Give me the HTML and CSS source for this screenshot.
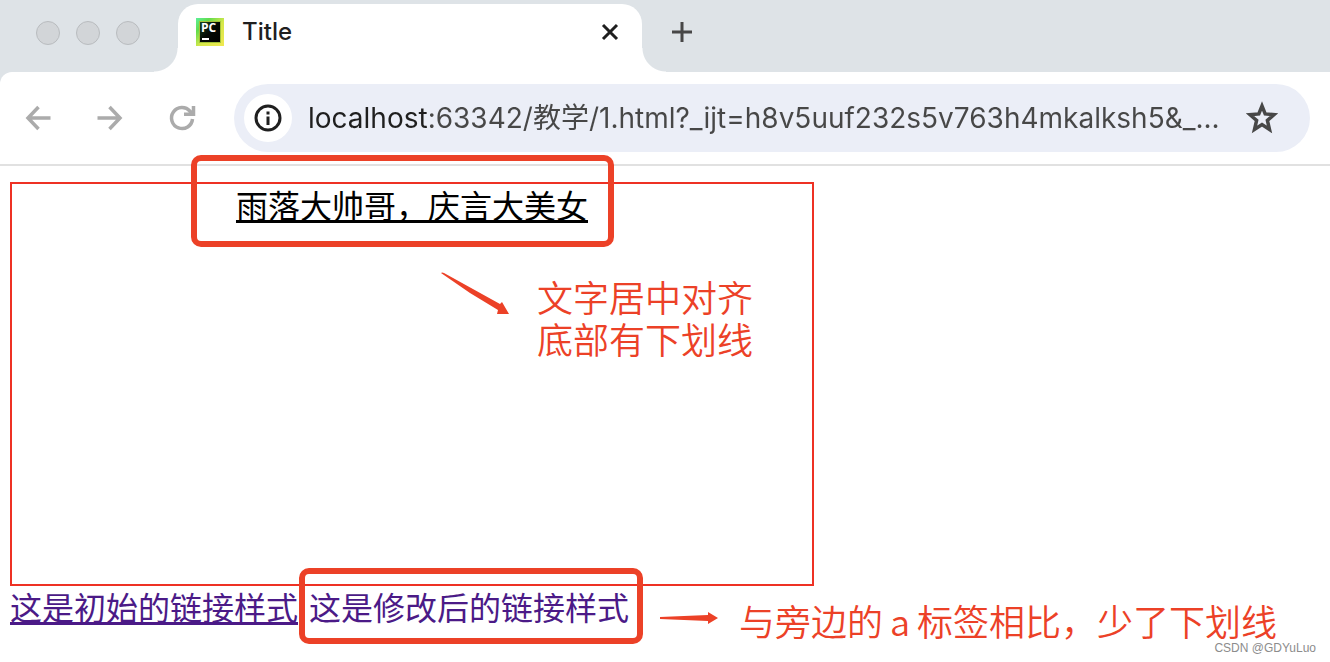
FILE: index.html
```html
<!DOCTYPE html>
<html lang="zh-CN">
<head>
    <meta charset="UTF-8">
    <title>Title</title>
    <link rel="stylesheet" href="styles.css">
</head>
<body>
    <!-- Tab strip -->
    <header class="tab-strip">
        <div class="window-buttons">
            <button type="button" class="dot" aria-label="Close window"></button>
            <button type="button" class="dot" aria-label="Minimize window"></button>
            <button type="button" class="dot" aria-label="Zoom window"></button>
        </div>
        <div class="tab">
            <svg class="favicon" viewBox="0 0 28 28">
                <defs>
                    <linearGradient id="frame" x1="0" y1="0" x2="1" y2="1">
                        <stop offset="0" stop-color="#5cf09a"></stop>
                        <stop offset="0.25" stop-color="#62dc4c"></stop>
                        <stop offset="0.55" stop-color="#d5e84a"></stop>
                        <stop offset="1" stop-color="#f0e850"></stop>
                    </linearGradient>
                    <linearGradient id="inner" x1="0" y1="0" x2="1" y2="1">
                        <stop offset="0" stop-color="#16451c"></stop>
                        <stop offset="0.5" stop-color="#040a04"></stop>
                        <stop offset="1" stop-color="#000"></stop>
                    </linearGradient>
                </defs>
                <rect width="28" height="28" fill="url(#frame)"></rect>
                <rect x="3" y="3" width="22" height="22" fill="#a3c238"></rect>
                <rect x="4" y="4" width="20" height="20" fill="url(#inner)"></rect>
                <rect x="6" y="20" width="7" height="2" fill="#fff"></rect>
                <text class="favicon-text" x="5" y="14">PC</text>
            </svg>
            <span class="tab-title">Title</span>
            <button type="button" class="icon-button" aria-label="Close tab">
                <svg width="24" height="24" viewBox="0 0 24 24" fill="none" stroke="#1f1f1f" stroke-width="3">
                    <path d="M5 5L19 19M19 5L5 19"></path>
                </svg>
            </button>
        </div>
        <button type="button" class="icon-button new-tab" aria-label="New tab">
            <svg width="24" height="24" viewBox="0 0 24 24" fill="none" stroke="#474747" stroke-width="3">
                <path d="M12 2V22M2 12H22"></path>
            </svg>
        </button>
    </header>

    <!-- Toolbar -->
    <nav class="toolbar">
        <div class="nav-buttons">
            <button type="button" class="icon-button" aria-label="Back">
                <svg width="28" height="28" viewBox="0 0 28 28" fill="none" stroke="#ababab" stroke-width="3.5">
                    <path d="M26.500 14H5M14.500 3L4 14L14.500 25"></path>
                </svg>
            </button>
            <button type="button" class="icon-button" aria-label="Forward">
                <svg width="28" height="28" viewBox="0 0 28 28" fill="none" stroke="#ababab" stroke-width="3.5">
                    <path d="M1.500 14H23M13.500 3L24 14L13.500 25"></path>
                </svg>
            </button>
            <button type="button" class="icon-button" aria-label="Reload">
                <svg width="28" height="28" viewBox="0 0 28 28" fill="none" stroke="#ababab" stroke-width="3.5">
                    <path d="M24.500 15A10.500 10.500 0 1 1 22 7.200L25 10.200M25.500 2V10.200H16"></path>
                </svg>
            </button>
        </div>
        <div class="address-bar">
            <button type="button" class="icon-button site-info" aria-label="Site information">
                <svg width="28" height="28" viewBox="0 0 28 28" fill="none" stroke="#1f1f1f" stroke-width="3">
                    <circle cx="14" cy="14" r="12"></circle>
                    <path d="M14 12.500V21M14 7.500V10.500"></path>
                </svg>
            </button>
            <input type="text" class="url" aria-label="Address" value="localhost:63342/教学/1.html?_ijt=h8v5uuf232s5v763h4mkalksh5&amp;_...">
            <button type="button" class="icon-button" aria-label="Bookmark this page">
                <svg width="36" height="36" viewBox="0 0 36 36" fill="none" stroke="#474747" stroke-width="3.5">
                    <path d="M18 6L21.200 13.900L30 14.700L23.400 20.400L25.500 29.500L18 24.600L10.500 29.500L12.600 20.400L6 14.700L14.800 13.900Z"></path>
                </svg>
            </button>
        </div>
    </nav>

    <!-- Page content -->
    <main class="page">
        <div class="box">雨落大帅哥，庆言大美女</div>
        <div class="links">
            <a class="link" href="#">这是初始的链接样式</a>
            <a class="link plain" href="#">这是修改后的链接样式</a>
        </div>

        <!-- Notes drawn over the page -->
        <div class="mark mark-text"></div>
        <svg class="arrow arrow-text" width="70" height="44" viewBox="0 0 70 44">
            <path d="M1 1Q2 0 4 1L60 32L62 30L69 42L57 42L58 38L30 21Z"></path>
        </svg>
        <p class="note note-text">文字居中对齐<br>底部有下划线</p>

        <div class="mark mark-link"></div>
        <svg class="arrow arrow-link" width="60" height="14" viewBox="0 0 60 14">
            <path d="M1 6L49 4L49 1L59 7L49 13L49 10L1 8Z"></path>
        </svg>
        <p class="note note-link">与旁边的<span class="tag-name">a</span>标签相比，少了下划线</p>
        <span class="watermark">CSDN @GDYuLuo</span>
    </main>
</body>
</html>
```
FILE: styles.css
```css
* {
    box-sizing: border-box;
}

body {
    margin: 0;
    min-height: 100vh;
    display: flex;
    flex-direction: column;
    background-color: #dee3e7;
    font-family: "Noto Sans CJK SC", sans-serif;
}

button {
    padding: 0;
    border: none;
    background: none;
}

.icon-button {
    display: flex;
    align-items: center;
    justify-content: center;
}

/* Tab strip */
.tab-strip {
    display: flex;
    height: 72px;
    padding-top: 4px;
}

.window-buttons {
    display: flex;
    gap: 16px;
    width: 178px;
    padding: 17px 0 0 36px;
}

.dot {
    width: 24px;
    height: 24px;
    border: 1px solid #b9bcbf;
    border-radius: 50%;
    background-color: #d2d5d8;
}

.tab {
    position: relative;
    display: flex;
    align-items: center;
    width: 464px;
    padding: 0 20px 12px 18px;
    border-radius: 20px 20px 0 0;
    background-color: #fff;
}

/* Curved feet of the active tab */
.tab::before,
.tab::after {
    content: "";
    position: absolute;
    bottom: 0;
    width: 24px;
    height: 24px;
}

.tab::before {
    right: 100%;
    background: radial-gradient(circle at 0 0, #dee3e7 23px, #fff 24px);
}

.tab::after {
    left: 100%;
    background: radial-gradient(circle at 100% 0, #dee3e7 23px, #fff 24px);
}

.favicon {
    width: 28px;
    height: 28px;
}

.favicon-text {
    font-family: "Open Sans", sans-serif;
    font-size: 12px;
    font-weight: 700;
    fill: #fff;
}

.tab-title {
    flex: 1;
    margin-left: 18px;
    font-family: Inter, sans-serif;
    font-size: 24px;
    font-weight: 500;
    line-height: 32px;
    color: #1f1f1f;
}

.new-tab {
    height: 56px;
    margin-left: 28px;
}

/* Toolbar */
.toolbar {
    display: flex;
    align-items: center;
    padding: 12px 20px 12px 24px;
    border-top-left-radius: 12px;
    background-color: #fff;
}

.nav-buttons {
    display: flex;
    gap: 44px;
    margin-right: 38px;
}

.address-bar {
    flex: 1;
    display: flex;
    align-items: center;
    height: 68px;
    padding: 0 30px 0 10px;
    border-radius: 34px;
    background-color: #ebeef7;
}

.site-info {
    width: 48px;
    height: 48px;
    border-radius: 50%;
    background-color: #fff;
}

/* The host part of the address is darker than the rest */
.url {
    flex: 1;
    min-width: 0;
    margin: 0 16px;
    padding: 0;
    border: none;
    outline: none;
    font-family: Inter, "Noto Sans CJK SC", sans-serif;
    font-size: 28px;
    line-height: 40px;
    color: transparent;
    caret-color: #1f1f1f;
    background: linear-gradient(to right, #1f1f1f 120px, #474747 120px);
    -webkit-background-clip: text;
    background-clip: text;
    text-overflow: ellipsis;
}

/* Page content */
.page {
    position: relative;
    flex: 1;
    padding: 16px 10px 0;
    border-top: 2px solid #e1e1e1;
    background-color: #fff;
    font-size: 32px;
    line-height: 40px;
}

.box {
    width: 804px;
    height: 404px;
    border: 2px solid #ee3124;
    text-align: center;
    text-decoration: underline;
    text-decoration-thickness: 3px;
}

.links {
    display: flex;
    gap: 11px;
}

.link {
    color: #4b1a87;
    text-decoration-thickness: 3px;
}

.plain {
    text-decoration: none;
}

/* Notes */
.mark {
    position: absolute;
    border: 6px solid #ec4127;
    border-radius: 10px;
}

.mark-text {
    top: -11px;
    left: 191px;
    width: 423px;
    height: 92px;
}

.mark-link {
    top: 402px;
    left: 299px;
    width: 344px;
    height: 76px;
}

.arrow {
    position: absolute;
    fill: #ec4127;
}

.arrow-text {
    top: 106px;
    left: 440px;
}

.arrow-link {
    top: 445px;
    left: 659px;
}

.note {
    position: absolute;
    margin: 0;
    font-size: 36px;
    font-weight: 350;
    line-height: 42px;
    color: #ec4127;
    white-space: nowrap;
}

.note-text {
    top: 109px;
    left: 537px;
}

.note-link {
    top: 433px;
    left: 739px;
}

.tag-name {
    padding: 0 7px;
}

.watermark {
    position: absolute;
    right: 14px;
    bottom: 6px;
    font-family: "Liberation Sans", sans-serif;
    font-size: 12px;
    line-height: 16px;
    color: #8c8c8c;
}
```
